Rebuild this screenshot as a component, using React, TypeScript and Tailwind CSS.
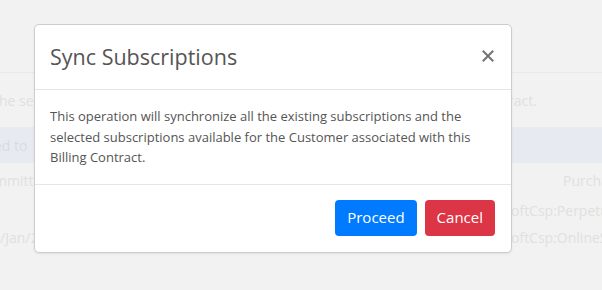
export default function App() {
  return (
    <div className="relative w-[602px] h-[290px] overflow-hidden bg-[#f2f2f2] font-['Open_Sans',sans-serif]">
      {/* faded page behind the backdrop */}
      <div className="pt-[72px] text-[14px] text-[#e0e0e0]">
        <div className="border-t border-[#e9e9e9]" />
        <div className="flex h-[54px] items-center justify-between whitespace-nowrap">
          <span className="ml-[-6px]">the sele</span>
          <span className="w-[91px]">
            <span className="ml-[-8px]">tract.</span>
          </span>
        </div>
        <div className="flex h-[36px] items-center whitespace-nowrap bg-[#e7ebf1] text-[#d6dce4]">
          <span className="ml-[-6px]">ed to</span>
        </div>
        <div className="flex h-[34px] items-center justify-between whitespace-nowrap">
          <span className="ml-[-6px]">mmitt</span>
          <span className="w-[39px]">Purcha</span>
        </div>
        <div className="flex h-[26px] items-center justify-end whitespace-nowrap">
          <span className="w-[91px]">oftCsp:Perpetua</span>
        </div>
        <div className="flex h-[28px] items-center justify-between whitespace-nowrap">
          <span>/Jan/2</span>
          <span className="w-[91px]">oftCsp:OnlineSe</span>
        </div>
      </div>

      {/* modal */}
      <div className="absolute left-[34px] top-[24px] w-[478px] rounded-[5px] border border-[#cdcdcd] bg-white shadow-[0_1px_2px_rgba(0,0,0,0.08)]">
        <div className="flex h-[65px] items-center justify-between border-b border-[#e5e5e5] pl-[15px] pr-[17px]">
          <h2 className="text-[21.5px] text-[#555]">Sync Subscriptions</h2>
          <button className="mb-[3px] flex h-[13px] w-[13px] items-center justify-center">
            <svg width="12" height="12" viewBox="0 0 12 12" fill="none" stroke="#737373" strokeWidth="2" strokeLinecap="square">
              <path d="M1.5 1.5l9 9M10.5 1.5l-9 9" />
            </svg>
          </button>
        </div>
        <div className="px-[15px] py-[16px] text-[13px] leading-[20.5px] text-[#555]">
          This operation will synchronize all the existing subscriptions and the
          <br />
          selected subscriptions available for the Customer associated with this
          <br />
          Billing Contract.
        </div>
        <div className="flex justify-end gap-2 border-t border-[#e2e6ee] px-4 pb-[16px] pt-[15px]">
          <button className="h-9 rounded bg-[#007bff] px-3 text-[15px] text-white">Proceed</button>
          <button className="h-9 rounded bg-[#dc3545] px-3 text-[15px] text-white">Cancel</button>
        </div>
      </div>
    </div>
  );
}
